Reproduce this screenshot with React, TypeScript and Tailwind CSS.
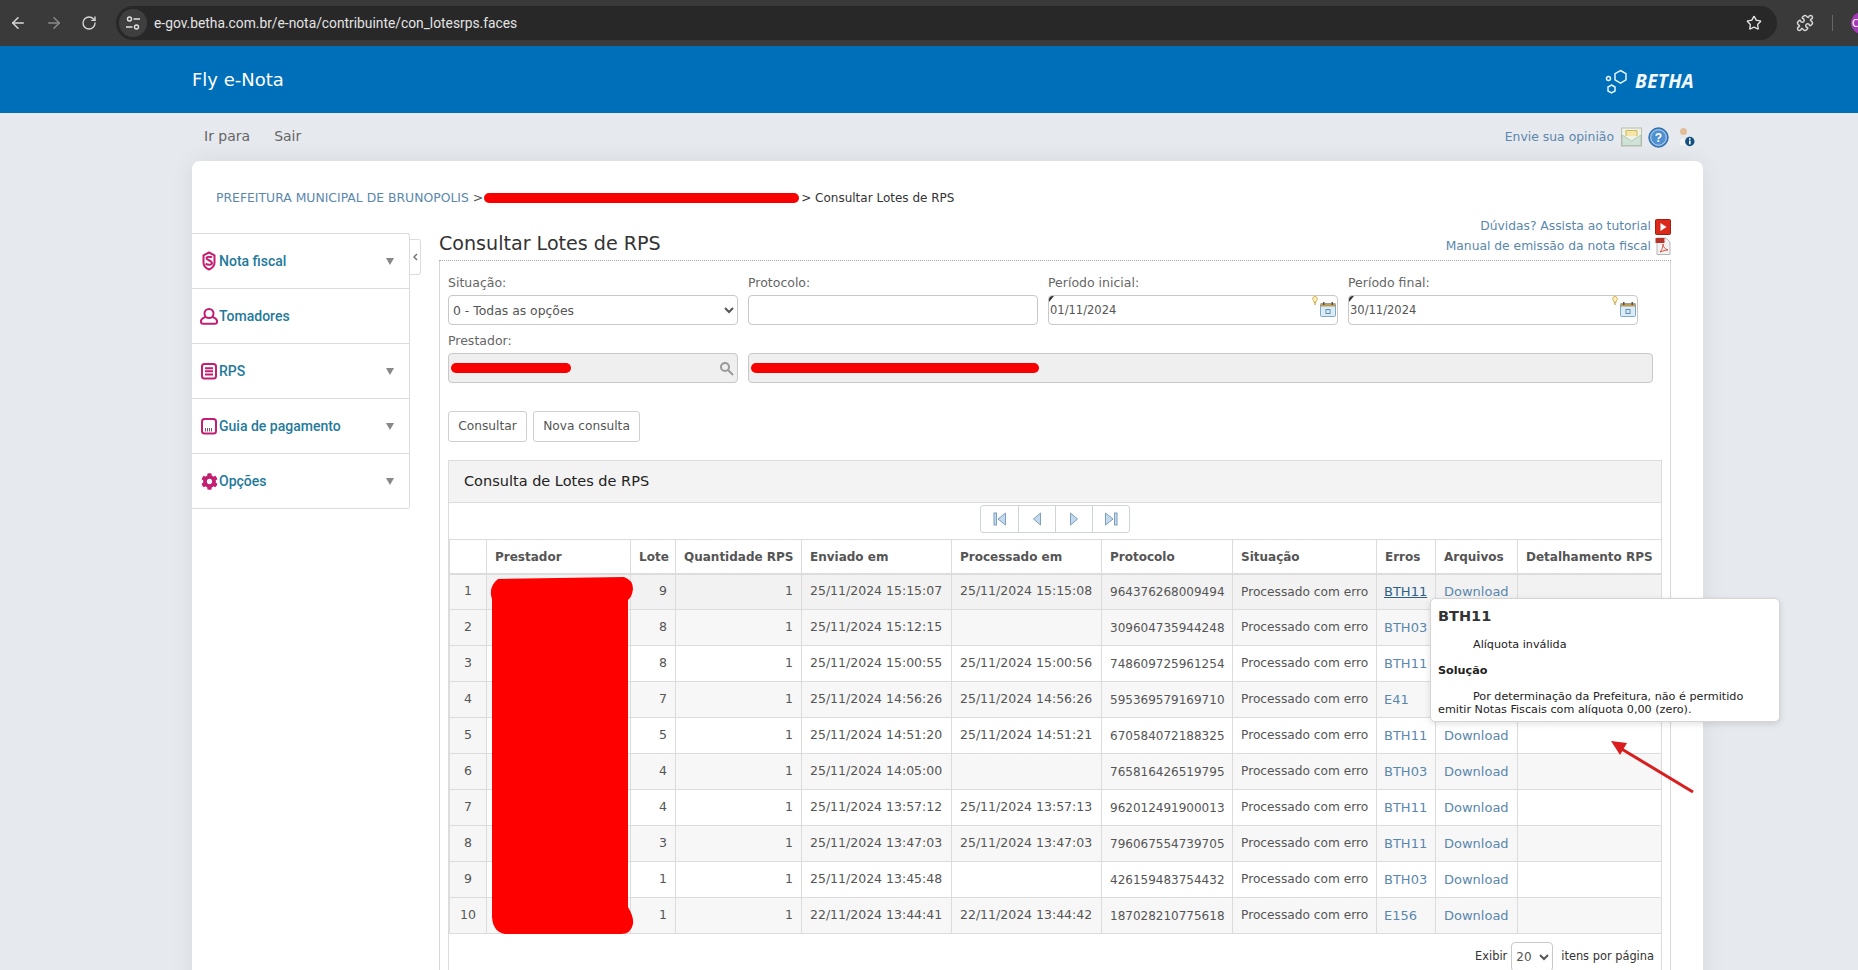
import { ArrowLeft, ArrowRight, RotateCw, Star, Puzzle } from "lucide-react";
import { FaCog } from "react-icons/fa";

const verdana = { fontFamily: '"DejaVu Sans", sans-serif' };

const rows = [
  ["9", "25/11/2024 15:15:07", "25/11/2024 15:15:08", "964376268009494", "BTH11"],
  ["8", "25/11/2024 15:12:15", "", "309604735944248", "BTH03"],
  ["8", "25/11/2024 15:00:55", "25/11/2024 15:00:56", "748609725961254", "BTH11"],
  ["7", "25/11/2024 14:56:26", "25/11/2024 14:56:26", "595369579169710", "E41"],
  ["5", "25/11/2024 14:51:20", "25/11/2024 14:51:21", "670584072188325", "BTH11"],
  ["4", "25/11/2024 14:05:00", "", "765816426519795", "BTH03"],
  ["4", "25/11/2024 13:57:12", "25/11/2024 13:57:13", "962012491900013", "BTH11"],
  ["3", "25/11/2024 13:47:03", "25/11/2024 13:47:03", "796067554739705", "BTH11"],
  ["1", "25/11/2024 13:45:48", "", "426159483754432", "BTH03"],
  ["1", "22/11/2024 13:44:41", "22/11/2024 13:44:42", "187028210775618", "E156"],
];

const headers = [
  "",
  "Prestador",
  "Lote",
  "Quantidade RPS",
  "Enviado em",
  "Processado em",
  "Protocolo",
  "Situação",
  "Erros",
  "Arquivos",
  "Detalhamento RPS",
];

function TuneIcon() {
  return (
    <svg width="16" height="16" viewBox="0 0 16 16" fill="none" stroke="#e3e3e3" strokeWidth="1.4">
      <circle cx="4.5" cy="4" r="2" />
      <path d="M8.5 4H15M1 12h6.5" />
      <circle cx="11.5" cy="12" r="2" />
    </svg>
  );
}

function BethaLogo() {
  return (
    <svg width="24" height="26" viewBox="0 0 24 26" fill="none" stroke="#e8f3fb" strokeWidth="1.5">
      <path d="M15.5 1.5l5.5 3.2v6.2l-5.5 3.2-5.5-3.2V4.700z" />
      <path d="M6.500 16l3.500 2v4l-3.500 2-3.500-2v-4z" />
      <circle cx="3.500" cy="9.500" r="2" />
    </svg>
  );
}

function MailIcon() {
  return (
    <svg width="21" height="20" viewBox="0 0 21 20">
      <rect x="0.500" y="1" width="20" height="18" fill="#eef1e6" stroke="#b9bfae" />
      <path d="M5 9V3.500h11V9" fill="#f5e6a8" stroke="#d0b860" />
      <path d="M1 8l9.500 6 9.500-6v10.500H1z" fill="#cfe3d6" stroke="#a8b8a8" strokeWidth="0.7" />
    </svg>
  );
}

function HelpIcon() {
  return (
    <svg width="21" height="21" viewBox="0 0 21 21">
      <circle cx="10.500" cy="10.500" r="9.700" fill="#3d80c4" stroke="#2a66a6" />
      <circle cx="10.500" cy="10.500" r="7.800" fill="#4f90d0" stroke="#cfe3f5" strokeWidth="0.9" />
      <text x="10.500" y="15" textAnchor="middle" fontSize="12" fontWeight="700" fill="#fff" fontFamily="Liberation Sans, sans-serif">?</text>
    </svg>
  );
}

function UserInfoIcon() {
  return (
    <svg width="18" height="20" viewBox="0 0 18 20">
      <circle cx="6.500" cy="4.500" r="3.500" fill="#e2bd98" />
      <path d="M2.500 19c-1-5 0-8 4-8s5 2 5 8z" fill="#f3f3f3" stroke="#ddd" strokeWidth="0.5" />
      <circle cx="12.800" cy="14.500" r="4.700" fill="#134f80" />
      <rect x="12" y="13.500" width="1.600" height="3.800" fill="#fff" />
      <rect x="12" y="11.200" width="1.600" height="1.500" fill="#fff" />
    </svg>
  );
}

function PlayIcon() {
  return (
    <svg width="16" height="16" viewBox="0 0 16 16">
      <rect x="0.500" y="0.500" width="15" height="15" rx="1" fill="#d92a1c" stroke="#a71d12" />
      <path d="M5.500 4l6 4-6 4z" fill="#fff" />
    </svg>
  );
}

function PdfIcon() {
  return (
    <svg width="16" height="18" viewBox="0 0 16 18">
      <path d="M2 1h9l4 4v12.500H2z" fill="#f2f2f2" stroke="#b5b5b5" />
      <rect x="0.500" y="1" width="9" height="5" fill="#b8322a" />
      <path d="M5 15c2-2 3-5 3-8 0 3 2 5 5 6-3 0-5 1-8 2z" fill="none" stroke="#d5453a" strokeWidth="0.9" />
    </svg>
  );
}

function DateIcons() {
  return (
    <div className="flex items-end gap-[2px] pr-[1px]">
      <svg width="6" height="9" viewBox="0 0 6 9" className="mb-[19px]">
        <path d="M3 .5a2.300 2.300 0 0 1 1.300 4.200L4 6.500H2l-.3-1.800A2.300 2.300 0 0 1 3 .5z" fill="#fff3c4" stroke="#c79a20" strokeWidth="0.8" />
        <path d="M2.200 8h1.600" stroke="#8a6f20" />
      </svg>
      <svg width="16" height="15" viewBox="0 0 16 15" className="mb-[7px]">
        <rect x="0.500" y="1.500" width="15" height="13" rx="1" fill="#dcecf6" stroke="#7da9c6" />
        <rect x="0.500" y="1.500" width="15" height="3" fill="#b99a56" />
        <rect x="3" y="0" width="1.500" height="3" fill="#555" />
        <rect x="11.500" y="0" width="1.500" height="3" fill="#555" />
        <rect x="6" y="7.500" width="4" height="4" fill="none" stroke="#5b8fb4" />
      </svg>
    </div>
  );
}

function DateField({ value }: { value: string }) {
  return (
    <div className="relative flex h-[30px] w-[290px] items-center justify-between rounded-[4px] border border-[#c8c8c8] bg-white pl-[1px] text-[11.5px] text-[#555]">
      <span className="absolute left-0 top-0 h-0 w-0 rounded-tl-[4px] border-t-[6px] border-r-[5px] border-t-[#333] border-r-transparent" />
      <span className="pt-[1px]">{value}</span>
      <DateIcons />
    </div>
  );
}

const menuIconClass = "h-[20px] w-[20px] shrink-0";

const menu = [
  {
    label: "Nota fiscal",
    arrow: true,
    icon: (
      <svg className={menuIconClass} viewBox="0 0 20 20" fill="none" stroke="#c21e72" strokeWidth="2">
        <path d="M10 1.500l5.500 2.800v7.200c0 3.600-2.500 5.800-5.500 7-3-1.200-5.500-3.400-5.500-7V4.300z" strokeLinejoin="round" />
        <path d="M13 6.500c-1-1-5-1.500-5.500.5S13 9.500 13 12s-5 2-6.300.5" />
      </svg>
    ),
  },
  {
    label: "Tomadores",
    arrow: false,
    icon: (
      <svg className={menuIconClass} viewBox="0 0 20 20" fill="none" stroke="#c21e72" strokeWidth="2">
        <circle cx="10" cy="7.500" r="4.500" />
        <path d="M6.500 11C3.500 12 1.500 14 2 16.500c.2 1 1 1.300 2 1.300h12c1 0 1.800-.3 2-1.300.5-2.500-1.500-4.500-4.500-5.500" />
      </svg>
    ),
  },
  {
    label: "RPS",
    arrow: true,
    icon: (
      <svg className={menuIconClass} viewBox="0 0 20 20" fill="none" stroke="#c21e72" strokeWidth="2">
        <rect x="3" y="3" width="14" height="14.500" rx="2.500" />
        <path d="M6 7.200h8M6 10.300h8M6 13.400h8" />
      </svg>
    ),
  },
  {
    label: "Guia de pagamento",
    arrow: true,
    icon: (
      <svg className={menuIconClass} viewBox="0 0 20 20" fill="none" stroke="#c21e72" strokeWidth="2">
        <rect x="3" y="3" width="14" height="14.500" rx="2.500" />
        <path d="M6.500 15.500v-3.500M8.500 15.500v-3.500M10.500 15.500v-3.500M12.500 15.500v-3.500" strokeWidth="1" stroke="#8a4a6c" />
      </svg>
    ),
  },
  {
    label: "Opções",
    arrow: true,
    icon: <FaCog className="h-[17px] w-[17px] shrink-0 text-[#c21e72]" />,
  },
];

function PagerIcon({ dir, bar }: { dir: "left" | "right"; bar: boolean }) {
  return (
    <svg width="14" height="14" viewBox="0 0 14 14" fill="#c5d9ec" stroke="#7ba0c2" strokeWidth="1">
      {dir === "left" ? (
        <g>
          {bar && <rect x="1" y="1" width="2.500" height="12" />}
          <path d={bar ? "M12.500 1v12L5 7z" : "M10.500 1v12L3.500 7z"} />
        </g>
      ) : (
        <g>
          {bar && <rect x="10.500" y="1" width="2.500" height="12" />}
          <path d={bar ? "M1.500 1v12L9 7z" : "M3.500 1v12L10.500 7z"} />
        </g>
      )}
    </svg>
  );
}

export default function App() {
  return (
    <div className="h-screen w-full overflow-hidden bg-[#e6e9ed]" style={verdana}>
      {/* browser bar */}
      <div className="flex h-[46px] items-center overflow-hidden bg-[#3a3a3a]">
        <div className="flex w-[116px] shrink-0 items-center gap-[18px] pl-[9px]">
          <ArrowLeft size={18} color="#d8d8d8" />
          <ArrowRight size={18} color="#8a8a8a" />
          <RotateCw size={16} color="#d8d8d8" />
        </div>
        <div className="flex h-[34px] w-[1661px] shrink-0 items-center justify-between rounded-full bg-[#282828] pr-[15px]">
          <div className="flex items-center">
            <div className="ml-[3px] flex h-[28px] w-[28px] items-center justify-center rounded-full bg-[#3f3f3f]">
              <TuneIcon />
            </div>
            <span className="ml-[7px] text-[13.800px] text-[#e3e3e3]" style={{ fontFamily: "Roboto, sans-serif" }}>
              e-gov.betha.com.br/e-nota/contribuinte/con_lotesrps.faces
            </span>
          </div>
          <Star size={16} color="#e3e3e3" />
        </div>
        <Puzzle size={18} color="#d8d8d8" className="ml-[19px] shrink-0" />
        <div className="ml-[18px] h-[16px] w-px shrink-0 bg-[#666]" />
        <div className="ml-[18px] flex h-[22px] w-[22px] shrink-0 items-center justify-start rounded-full bg-[#a23ab5] pl-[1px] text-[10px] text-white">
          C
        </div>
      </div>

      {/* blue header */}
      <div className="flex h-[67px] items-center justify-between bg-[#006fba] pl-[192px] pr-[164px]">
        <span className="text-[18px] font-normal text-white">Fly e-Nota</span>
        <div className="flex items-center gap-[6px] pt-[4px]">
          <BethaLogo />
          <span className="text-[19px] font-bold italic tracking-[0.3px] text-[#f2f8fc]" style={{ fontFamily: '"Open Sans", sans-serif' }}>
            BETHA
          </span>
        </div>
      </div>

      {/* top links */}
      <div className="flex h-[48px] items-center justify-between pl-[204px] pr-[163px]">
        <div className="flex gap-[24px] pb-[2px] text-[14px] text-[#666]">
          <span>Ir para</span>
          <span>Sair</span>
        </div>
        <div className="flex items-center">
          <span className="mr-[7px] text-[12.400px] text-[#5a87ad]">Envie sua opinião</span>
          <MailIcon />
          <span className="w-[6px]" />
          <HelpIcon />
          <span className="w-[8px]" />
          <UserInfoIcon />
        </div>
      </div>

      {/* card */}
      <div className="relative ml-[192px] h-[900px] w-[1511px] rounded-t-[8px] bg-white shadow-[0_0_24px_rgba(0,0,0,0.07)]">
        <div className="flex h-[55px] items-center pl-[24px] pt-[19px] text-[12.400px]">
          <span className="text-[#5a87ad]">PREFEITURA MUNICIPAL DE BRUNOPOLIS</span>
          <span className="ml-[4px] text-[#555]">&gt;</span>
          <span className="ml-[1px] h-[10px] w-[315px] rounded-full bg-[#f80000]" />
          <span className="ml-[2px] text-[12px] text-[#333]">&gt; Consultar Lotes de RPS</span>
        </div>

        <div className="flex items-start">
          {/* side menu */}
          <div className="mt-[17px] w-[218px] shrink-0 rounded-r-[3px] border-t border-r border-[#dcdcdc]" style={{ fontFamily: "Roboto, sans-serif" }}>
            {menu.map((item) => (
              <div key={item.label} className="flex h-[55px] items-center justify-between border-b border-[#dcdcdc] pl-[7px] pr-[15px]">
                <div className="flex items-center">
                  <span className="flex w-[20px] justify-center">{item.icon}</span>
                  <span className="text-[14px] font-medium text-[#1f7a9c]">{item.label}</span>
                </div>
                {item.arrow && (
                  <span className="h-0 w-0 border-x-[4px] border-t-[7px] border-x-transparent border-t-[#888]" />
                )}
              </div>
            ))}
          </div>
          <div className="mt-[23px] flex h-[36px] w-[11px] shrink-0 items-center justify-center rounded-r-[3px] border border-l-0 border-[#dcdcdc] text-[#777]">
            <svg width="5" height="8" viewBox="0 0 5 8" fill="none" stroke="#777" strokeWidth="1.500">
              <path d="M4 1L1 4l3 3" />
            </svg>
          </div>

          {/* main */}
          <div className="ml-[18px] w-[1232px]">
            <div className="flex h-[45px] items-end justify-between border-b border-dotted border-[#aaa]">
              <h1 className="pb-[4px] text-[19.100px] leading-[24px] text-[#333]">Consultar Lotes de RPS</h1>
              <div className="flex flex-col items-end gap-[2px] pb-[5px] text-[12.300px] leading-[17px] text-[#5a87ad]">
                <div className="flex items-center gap-[4px]">
                  <span>Dúvidas? Assista ao tutorial</span>
                  <PlayIcon />
                </div>
                <div className="flex items-center gap-[4px]">
                  <span>Manual de emissão da nota fiscal</span>
                  <PdfIcon />
                </div>
              </div>
            </div>

            <div className="relative h-[720px] border-x border-[#d8d8d8] pl-[8px] pr-[8px] pt-[14px]">
              <div className="flex gap-[10px] text-[12.500px] text-[#666]">
                <div className="flex w-[290px] flex-col gap-[4px]">
                  <label className="leading-[16px]">Situação:</label>
                  <select className="h-[30px] w-full rounded-[4px] border border-[#c8c8c8] bg-white text-[12.400px] text-[#555]">
                    <option>0 - Todas as opções</option>
                  </select>
                </div>
                <div className="flex w-[290px] flex-col gap-[4px]">
                  <label className="leading-[16px]">Protocolo:</label>
                  <div className="h-[30px] rounded-[4px] border border-[#c8c8c8] bg-white" />
                </div>
                <div className="flex w-[290px] flex-col gap-[4px]">
                  <label className="leading-[16px]">Período inicial:</label>
                  <DateField value="01/11/2024" />
                </div>
                <div className="flex w-[290px] flex-col gap-[4px]">
                  <label className="leading-[16px]">Período final:</label>
                  <DateField value="30/11/2024" />
                </div>
              </div>

              <div className="mt-[8px] text-[12.500px] leading-[16px] text-[#666]">Prestador:</div>
              <div className="mt-[4px] flex gap-[10px]">
                <div className="flex h-[30px] w-[290px] items-center justify-between rounded-[4px] border border-[#c8c8c8] bg-[#efefef] pl-[2px] pr-[3px]">
                  <span className="h-[10px] w-[120px] rounded-full bg-[#f80000]" />
                  <svg width="15" height="15" viewBox="0 0 15 15" fill="none" stroke="#999" strokeWidth="2">
                    <circle cx="6" cy="6" r="4" />
                    <path d="M9 9l5 5" />
                  </svg>
                </div>
                <div className="flex h-[30px] w-[905px] items-center rounded-[4px] border border-[#c8c8c8] bg-[#efefef] pl-[2px]">
                  <span className="h-[10px] w-[288px] rounded-full bg-[#f80000]" />
                </div>
              </div>

              <div className="mt-[28px] flex gap-[6px] text-[12.200px] text-[#555]">
                <button className="h-[31px] w-[79px] rounded-[3px] border border-[#cfcfcf] bg-white">Consultar</button>
                <button className="h-[31px] w-[107px] rounded-[3px] border border-[#cfcfcf] bg-white">Nova consulta</button>
              </div>

              {/* results panel */}
              <div className="relative mt-[18px] w-[1214px] border-x border-t border-[#dcdcdc]">
                <div className="flex h-[41px] items-center bg-[#f3f3f3] pl-[15px] text-[14.500px] text-[#222]">
                  Consulta de Lotes de RPS
                </div>
                <div className="flex h-[37px] items-start justify-center border-t border-[#dcdcdc] pt-[2px]">
                  <div className="flex h-[28px] rounded-[3px] border border-[#cfd4d8] bg-white">
                    {[
                      { dir: "left" as const, bar: true },
                      { dir: "left" as const, bar: false },
                      { dir: "right" as const, bar: false },
                      { dir: "right" as const, bar: true },
                    ].map((b, i) => (
                      <div key={i} className={`flex w-[37px] items-center justify-center ${i > 0 ? "border-l border-[#cfd4d8]" : ""}`}>
                        <PagerIcon dir={b.dir} bar={b.bar} />
                      </div>
                    ))}
                  </div>
                </div>

                <table className="w-[1212px] table-fixed border-collapse text-[12.500px] text-[#555]">
                  <colgroup>
                    <col className="w-[37px]" />
                    <col className="w-[144px]" />
                    <col className="w-[45px]" />
                    <col className="w-[126px]" />
                    <col className="w-[150px]" />
                    <col className="w-[150px]" />
                    <col className="w-[131px]" />
                    <col className="w-[144px]" />
                    <col className="w-[59px]" />
                    <col className="w-[82px]" />
                    <col className="w-[144px]" />
                  </colgroup>
                  <thead>
                    <tr className="h-[34px] border-y border-b-2 border-[#dcdcdc]">
                      {headers.map((h, i) => (
                        <th key={i} className="border-x border-[#dcdcdc] px-[8px] pt-[2px] text-left text-[12px] font-bold whitespace-nowrap text-[#555]">
                          {h}
                        </th>
                      ))}
                    </tr>
                  </thead>
                  <tbody>
                    {rows.map((r, i) => (
                      <tr
                        key={i}
                        className={`h-[36px] border-b border-[#dcdcdc] ${i === 0 ? "bg-[#f2f2f2]" : i % 2 === 1 ? "bg-[#f7f7f7]" : "bg-white"}`}
                      >
                        <td className="border-x border-[#dcdcdc] bg-[#f6f6f6] text-center">{i + 1}</td>
                        <td className="border-x border-[#dcdcdc]" />
                        <td className="border-x border-[#dcdcdc] pr-[8px] text-right">{r[0]}</td>
                        <td className="border-x border-[#dcdcdc] pr-[8px] text-right">1</td>
                        <td className="border-x border-[#dcdcdc] pl-[8px] whitespace-nowrap">{r[1]}</td>
                        <td className="border-x border-[#dcdcdc] pl-[8px] whitespace-nowrap">{r[2]}</td>
                        <td className="border-x border-[#dcdcdc] pl-[8px] text-[12px]">{r[3]}</td>
                        <td className="border-x border-[#dcdcdc] pl-[8px] text-[12.200px] whitespace-nowrap">Processado com erro</td>
                        <td className={`border-x border-[#dcdcdc] pl-[7px] text-[13px] ${i === 0 ? "text-[#2f5f86] underline" : "text-[#5a87ad]"}`}>{r[4]}</td>
                        <td className="border-x border-[#dcdcdc] pl-[8px] text-[13px] text-[#5a87ad]">{i >= 1 && i <= 3 ? "" : "Download"}</td>
                        <td className="border-x border-[#dcdcdc]" />
                      </tr>
                    ))}
                  </tbody>
                </table>

                <div className="flex items-center justify-end pr-[7px] pt-[8px] text-[11.400px] text-[#333]">
                  <span>Exibir</span>
                  <select className="ml-[4px] h-[30px] w-[42px] rounded-[4px] border border-[#c8c8c8] bg-white text-[12px] text-[#555]">
                    <option>20</option>
                  </select>
                  <span className="ml-[8px]">itens por página</span>
                </div>

                {/* redaction scribble */}
                <svg className="absolute left-[40px] top-[116px]" width="146" height="360" viewBox="0 0 146 360">
                  <path
                    d="M9 2 L135 0 Q144 3 144 12 Q143 20 139 23 L139 330 Q145 340 144 347 Q142 357 132 357 L16 357 Q4 355 3 340 L3 22 Q-1 10 9 2 Z"
                    fill="#fe0000"
                  />
                </svg>
              </div>
            </div>
          </div>
        </div>
      </div>

      {/* tooltip */}
      <div className="absolute left-[1430px] top-[598px] h-[124px] w-[350px] rounded-[5px] border border-[#d5d5d5] bg-white px-[7px] text-[11.200px] leading-[13px] text-[#222] shadow-[0_2px_6px_rgba(0,0,0,0.12)]">
        <div className="mt-[8px] text-[14.500px] leading-[18px] font-bold text-[#333]">BTH11</div>
        <div className="mt-[13px] pl-[35px]">Alíquota inválida</div>
        <div className="mt-[13px] font-bold">Solução</div>
        <div className="mt-[13px] indent-[35px]">
          Por determinação da Prefeitura, não é permitido emitir Notas Fiscais com alíquota 0,00 (zero).
        </div>
      </div>

      {/* annotation arrow */}
      <svg className="absolute left-[1600px] top-[730px]" width="110" height="70" viewBox="0 0 110 70">
        <path d="M93 62L20 18" stroke="#d81e1e" strokeWidth="3" />
        <path d="M11 11L27 13L20 25Z" fill="#d81e1e" />
      </svg>
    </div>
  );
}
